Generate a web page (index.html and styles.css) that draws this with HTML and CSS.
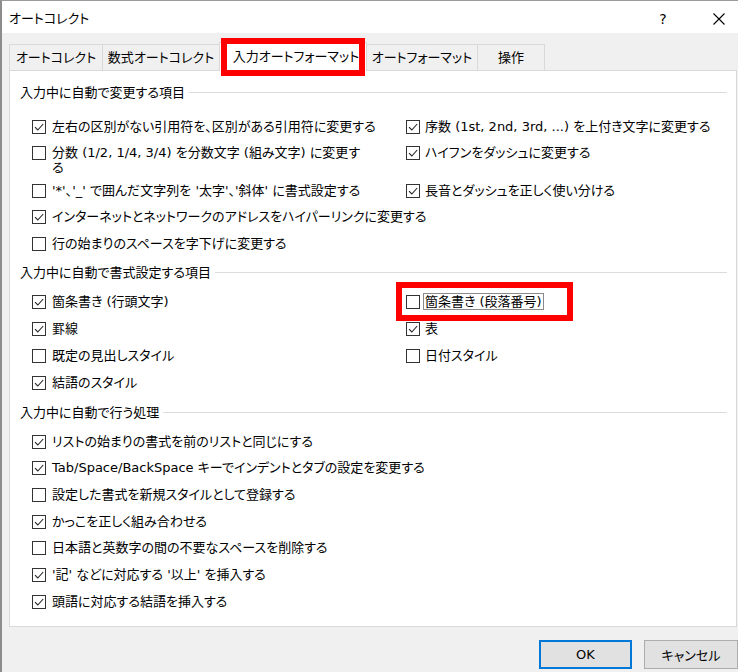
FILE: index.html
```html
<!DOCTYPE html>
<html lang="ja">

<head>
    <meta charset="UTF-8">
    <meta name="viewport" content="width=device-width, initial-scale=1.0">
    <title>オートコレクト</title>
    <link rel="stylesheet" href="styles.css">
</head>

<body>
    <div class="window">
        <div class="titlebar">
            <span class="title">オートコレクト</span>
            <span class="help">?</span>
            <span class="close">
                <svg width="12" height="12" viewBox="0 0 12 12"><path d="M0.5 0.5L11.5 11.5M11.5 0.5L0.5 11.5" stroke="#000" stroke-width="1.1" fill="none"/></svg>
            </span>
        </div>

        <div class="tabs">
            <div class="tab t1">オートコレクト</div>
            <div class="tab t2">数式オートコレクト</div>
            <div class="tab t3 active">入力オートフォーマット</div>
            <div class="tab t4">オートフォーマット</div>
            <div class="tab t5">操作</div>
        </div>

        <div class="panel">
            <!-- 入力中に自動で変更する項目 -->
            <div class="legend first">入力中に自動で変更する項目</div>
            <div class="items cols gap1">
                <div class="item"><span class="box on"><svg viewBox="0 0 12 12"><path d="M2 6.2L4.8 9L10.2 3"/></svg></span><span class="txt">左右の区別がない引用符を、区別がある引用符に変更する</span></div>
                <div class="item right"><span class="box on"><svg viewBox="0 0 12 12"><path d="M2 6.2L4.8 9L10.2 3"/></svg></span><span class="txt">序数 (1st, 2nd, 3rd, ...) を上付き文字に変更する</span></div>

                <div class="item wrap"><span class="box"></span><span class="txt">分数 (1/2, 1/4, 3/4) を分数文字 (組み文字) に変更する</span></div>
                <div class="item right"><span class="box on"><svg viewBox="0 0 12 12"><path d="M2 6.2L4.8 9L10.2 3"/></svg></span><span class="txt">ハイフンをダッシュに変更する</span></div>

                <div class="item"><span class="box"></span><span class="txt">'*'、'_' で囲んだ文字列を '太字'、'斜体' に書式設定する</span></div>
                <div class="item right"><span class="box on"><svg viewBox="0 0 12 12"><path d="M2 6.2L4.8 9L10.2 3"/></svg></span><span class="txt">長音とダッシュを正しく使い分ける</span></div>

                <div class="item span"><span class="box on"><svg viewBox="0 0 12 12"><path d="M2 6.2L4.8 9L10.2 3"/></svg></span><span class="txt">インターネットとネットワークのアドレスをハイパーリンクに変更する</span></div>
                <div class="item span"><span class="box"></span><span class="txt">行の始まりのスペースを字下げに変更する</span></div>
            </div>

            <!-- 入力中に自動で書式設定する項目 -->
            <div class="legend second">入力中に自動で書式設定する項目</div>
            <div class="items cols gap2">
                <div class="item"><span class="box on"><svg viewBox="0 0 12 12"><path d="M2 6.2L4.8 9L10.2 3"/></svg></span><span class="txt">箇条書き (行頭文字)</span></div>
                <div class="item right marked"><span class="box"></span><span class="txt focus">箇条書き (段落番号)</span></div>

                <div class="item"><span class="box on"><svg viewBox="0 0 12 12"><path d="M2 6.2L4.8 9L10.2 3"/></svg></span><span class="txt">罫線</span></div>
                <div class="item right"><span class="box on"><svg viewBox="0 0 12 12"><path d="M2 6.2L4.8 9L10.2 3"/></svg></span><span class="txt">表</span></div>

                <div class="item"><span class="box"></span><span class="txt">既定の見出しスタイル</span></div>
                <div class="item right"><span class="box"></span><span class="txt">日付スタイル</span></div>

                <div class="item span"><span class="box on"><svg viewBox="0 0 12 12"><path d="M2 6.2L4.8 9L10.2 3"/></svg></span><span class="txt">結語のスタイル</span></div>
            </div>

            <!-- 入力中に自動で行う処理 -->
            <div class="legend third">入力中に自動で行う処理</div>
            <div class="items gap3">
                <div class="item"><span class="box on"><svg viewBox="0 0 12 12"><path d="M2 6.2L4.8 9L10.2 3"/></svg></span><span class="txt">リストの始まりの書式を前のリストと同じにする</span></div>
                <div class="item"><span class="box on"><svg viewBox="0 0 12 12"><path d="M2 6.2L4.8 9L10.2 3"/></svg></span><span class="txt">Tab/Space/BackSpace キーでインデントとタブの設定を変更する</span></div>
                <div class="item"><span class="box"></span><span class="txt">設定した書式を新規スタイルとして登録する</span></div>
                <div class="item"><span class="box on"><svg viewBox="0 0 12 12"><path d="M2 6.2L4.8 9L10.2 3"/></svg></span><span class="txt">かっこを正しく組み合わせる</span></div>
                <div class="item"><span class="box"></span><span class="txt">日本語と英数字の間の不要なスペースを削除する</span></div>
                <div class="item"><span class="box on"><svg viewBox="0 0 12 12"><path d="M2 6.2L4.8 9L10.2 3"/></svg></span><span class="txt">'記' などに対応する '以上' を挿入する</span></div>
                <div class="item"><span class="box on"><svg viewBox="0 0 12 12"><path d="M2 6.2L4.8 9L10.2 3"/></svg></span><span class="txt">頭語に対応する結語を挿入する</span></div>
            </div>
        </div>

        <div class="footer">
            <button class="btn ok">OK</button>
            <button class="btn">キャンセル</button>
        </div>
    </div>
</body>

</html>
```

FILE: styles.css
```css
*,
*::before,
*::after {
    padding: 0;
    margin: 0;
    box-sizing: border-box;
}

body {
    width: 738px;
    height: 672px;
    overflow: hidden;
    background: #fff;
    font-family: "DejaVu Sans", "Noto Sans CJK JP", sans-serif;
    font-feature-settings: "palt";
    font-size: 13px;
    color: #000;
}

.window {
    width: 738px;
    height: 672px;
    background: #f0f0f0;
    border-left: 2px solid #8c8c8c;
    border-top: 1px solid #9a9a9a;
}

/* タイトルバー */
.titlebar {
    height: 32px;
    background: #fff;
    display: flex;
    align-items: center;
    padding: 3px 0 0 7px;
}

.title {
    flex: 1;
    line-height: 15px;
}

.help {
    width: 20px;
    margin-right: 40px;
    text-align: center;
    font-size: 14px;
}

.close {
    width: 12px;
    height: 12px;
    margin-right: 13px;
    display: flex;
}

/* タブ */
.tabs {
    display: flex;
    align-items: flex-end;
    height: 37px;
    padding-left: 7px;
}

.tab {
    height: 26px;
    line-height: 25px;
    text-align: center;
    border: 1px solid #d9d9d9;
    border-bottom: none;
    margin-right: -1px;
    background: #f0f0f0;
}

.t1 {
    width: 94px;
}

.t2 {
    width: 118px;
}

.t3 {
    width: 148px;
}

.t4 {
    width: 112px;
}

.t5 {
    width: 68px;
}

.tab.active {
    position: relative;
    z-index: 1;
    height: 29px;
    line-height: 27px;
    margin-bottom: -1px;
    background: #fff;
    padding-left: 6px;
}

.tab.active::after {
    content: "";
    position: absolute;
    left: 1px;
    right: 1px;
    top: -5px;
    bottom: -5px;
    border: 6px solid #f00;
}

/* パネル */
.panel {
    margin-left: 7px;
    width: 728px;
    height: 557px;
    background: #fff;
    border: 1px solid #d9d9d9;
    padding: 0 9px 0 10px;
}

.legend {
    display: flex;
    align-items: center;
    line-height: 15px;
}

.legend::after {
    content: "";
    flex: 1;
    height: 1px;
    margin-left: 4px;
    background: #dcdcdc;
}

.legend.first {
    margin-top: 14px;
}

.legend.second {
    margin-top: 14px;
}

.legend.third {
    margin-top: 15px;
}

.items {
    display: grid;
    grid-template-columns: 374px 1fr;
    row-gap: 11.67px;
    padding-left: 12px;
}

.gap1 {
    margin-top: 18.5px;
}

.gap2 {
    margin-top: 13.5px;
}

.gap3 {
    margin-top: 14px;
}

.items.gap3 {
    grid-template-columns: 1fr;
}

.item {
    display: flex;
    align-items: flex-start;
    line-height: 15px;
}

.item.span {
    grid-column: 1 / 3;
}

.item.wrap {
    margin-bottom: -4px;
}

.item.wrap .txt {
    max-width: 318px;
}

.box {
    flex: none;
    width: 14px;
    height: 14px;
    margin-top: 1px;
    margin-right: 6px;
    border: 1px solid #333;
    background: #fff;
    display: flex;
    align-items: center;
    justify-content: center;
}

.right .box {
    margin-right: 5px;
}

.box svg {
    width: 12px;
    height: 12px;
    fill: none;
    stroke: #222;
    stroke-width: 1.1;
}

.focus {
    border: 1px solid #8a8a8a;
    padding: 0 1px;
    margin: -1px 0 0 -2px;
    line-height: 15px;
}

.marked {
    position: relative;
}

.marked::after {
    content: "";
    position: absolute;
    left: -10px;
    top: -11.5px;
    width: 177px;
    height: 39px;
    border: 6px solid #f00;
    z-index: 1;
}

/* ボタン */
.footer {
    display: flex;
    justify-content: flex-end;
    gap: 12px;
    padding-top: 13px;
}

.btn {
    width: 93px;
    height: 29px;
    background: #e1e1e1;
    border: 1px solid #adadad;
    font-family: inherit;
    font-size: 13px;
    font-feature-settings: "palt";
    color: #000;
}

.btn + .btn {
    width: 94px;
}

.btn.ok {
    border: 2px solid #0078d7;
}
```
